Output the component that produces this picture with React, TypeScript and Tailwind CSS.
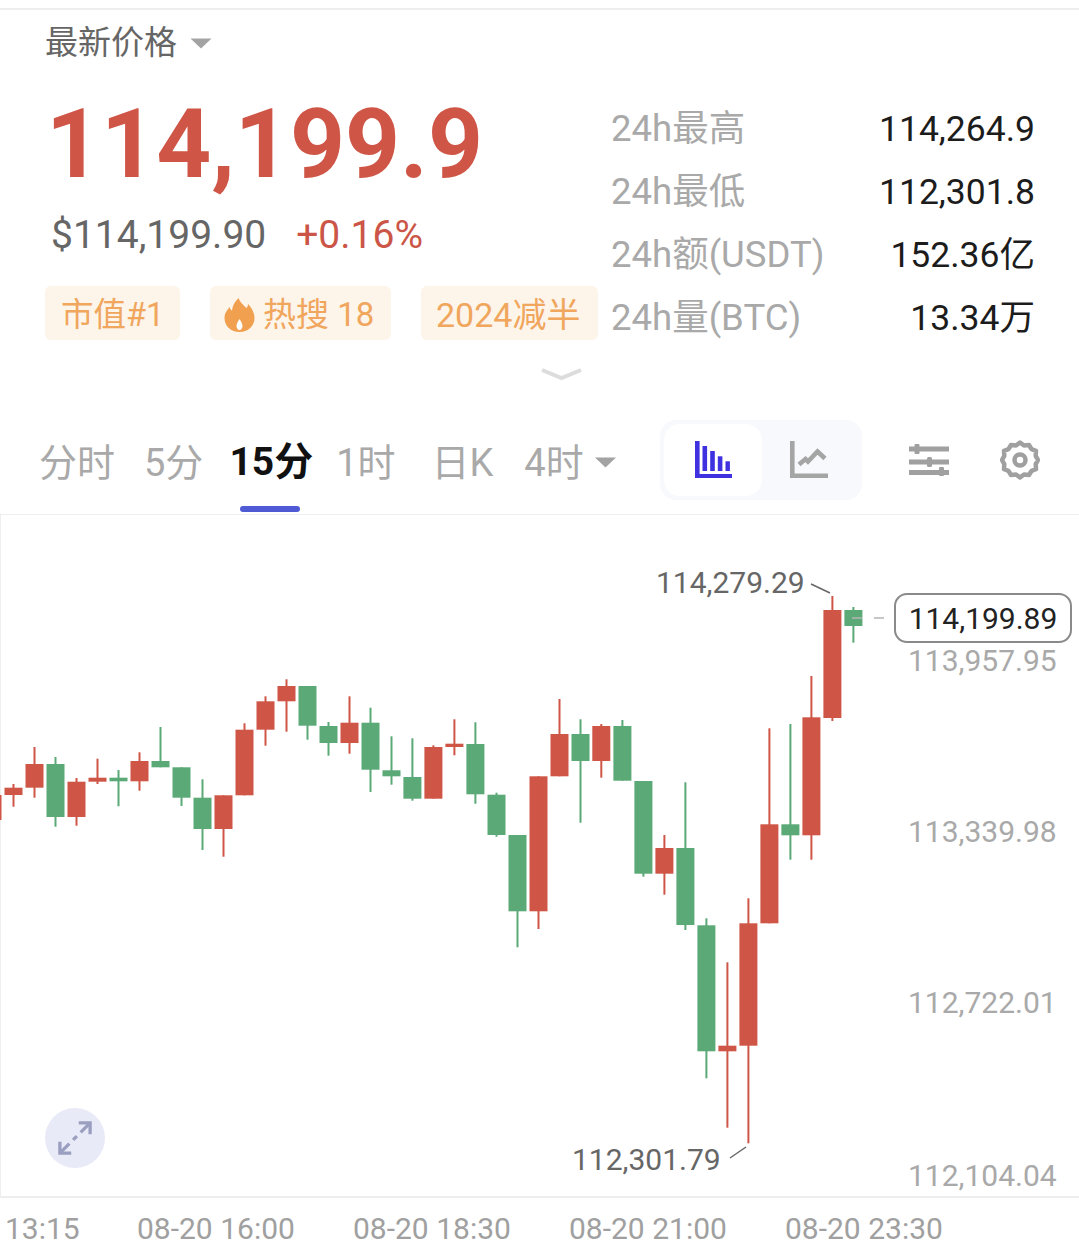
const UP = '#cf5647';
const DOWN = '#5aa976';

// [centre x, body top, body bottom, wick top, wick bottom, up?]
const CANDLES: [number, number, number, number, number, boolean][] = [
  [-7.5, 795, 820, 795, 820, true],
  [13.5, 787.7, 795, 784, 806.7, true],
  [34.5, 764, 787.7, 747, 797.7, true],
  [55.5, 764, 817, 757, 826.7, false],
  [76.5, 781.7, 817, 778, 825.7, true],
  [97.5, 777.7, 781.7, 758.7, 784, true],
  [118.5, 777.7, 781.3, 770, 806.3, false],
  [139.5, 761, 781.3, 752.3, 790.7, true],
  [160.5, 761, 767.3, 727, 767.3, false],
  [181.5, 767.3, 797.7, 767.3, 806, false],
  [202.5, 797.7, 829, 779.3, 850, false],
  [223.5, 795.3, 829, 795.3, 856.7, true],
  [244.5, 729.7, 795.3, 723.3, 795.3, true],
  [265.5, 701.3, 729.7, 696.3, 745.7, true],
  [286.5, 686, 701.3, 679.3, 731.7, true],
  [307.5, 686, 725.7, 686, 739.7, false],
  [328.5, 726, 743, 722, 755.7, false],
  [349.5, 722.7, 743, 696.3, 753.7, true],
  [370.5, 722.7, 769.7, 707.7, 792, false],
  [391.5, 770.3, 776.3, 736.3, 784.7, false],
  [412.4, 777, 798.7, 738.3, 800.7, false],
  [433.4, 747, 798.7, 745.3, 798.7, true],
  [454.4, 743.7, 747, 719.3, 755.3, true],
  [475.4, 744, 794.3, 722.3, 803.7, false],
  [496.5, 794.7, 835, 792.7, 836.7, false],
  [517.5, 835, 911.3, 835, 947.3, false],
  [538.5, 776.3, 911.3, 776.3, 929, true],
  [559.5, 734, 776.3, 699, 776.3, true],
  [580.5, 734, 761, 719.3, 822.7, false],
  [601.3, 726, 761, 724, 777.7, true],
  [622.4, 726, 780.7, 720, 780.7, false],
  [643.4, 781, 873.7, 781, 876.7, false],
  [664.4, 848, 873.7, 835, 894.7, true],
  [685.4, 848, 925, 782.3, 930, false],
  [706.4, 925.3, 1051.3, 918.3, 1078.3, false],
  [727.4, 1045.7, 1051.3, 962.3, 1127.7, true],
  [748.4, 923.3, 1045.7, 898.3, 1143.3, true],
  [769.4, 824.3, 923.3, 728.3, 923.3, true],
  [790.4, 824.3, 835.3, 724, 859.7, false],
  [811.4, 717.3, 835.3, 676, 859.7, true],
  [832.4, 610, 718, 596, 721, true],
  [853.4, 610, 626, 607, 642.7, false],
];

const CHART_TOP = 515;

const STATS = [
  ['24h最高', '114,264.9'],
  ['24h最低', '112,301.8'],
  ['24h额(USDT)', '152.36亿'],
  ['24h量(BTC)', '13.34万'],
];

const AXIS = [
  ['113,957.95', 'top-[128px]'],
  ['113,339.98', 'top-[299px]'],
  ['112,722.01', 'top-[470px]'],
  ['112,104.04', 'top-[643px]'],
];

const TIME_LABELS = ['08-20 16:00', '08-20 18:30', '08-20 21:00', '08-20 23:30'];

function Caret({ className }: { className: string }) {
  return (
    <svg viewBox="0 0 22 11" className={className} fill="#a3a3a3">
      <path d="M0.5 0.5h21L11 10.5z" />
    </svg>
  );
}

function FlameIcon() {
  return (
    <svg viewBox="0 0 30 34" className="h-[34px] w-[31px]">
      <path
        fill="#f0a04f"
        d="M14 0c2 5 5 7 8 10 1-1 1.500-2.500 1.500-4 4 4 6.500 9 6.500 14 0 8-6.500 14-15 14S0 28 0 20c0-5 3-8 5-11 .5 2 1.500 3 2.500 3.500C8 8 10 4 14 0z"
      />
      <path fill="#fff" d="M15 21c1.500 2.500 3 4.500 3 7 0 2-1.300 4-3 4s-3-2-3-4c0-2.500 1.500-4.500 3-7z" />
    </svg>
  );
}

function BarsIcon() {
  return (
    <svg viewBox="0 0 38 38" className="h-[38px] w-[38px]" fill="#3f30e0">
      <rect x="0" y="0" width="4.600" height="37" />
      <rect x="0" y="33" width="37" height="4" />
      <rect x="7.500" y="5" width="4.600" height="25" />
      <rect x="15.200" y="10" width="4.600" height="20" />
      <rect x="22.800" y="15.300" width="4.600" height="14.700" />
      <rect x="30.500" y="20.300" width="4.400" height="9.700" />
    </svg>
  );
}

function LineIcon() {
  return (
    <svg viewBox="0 0 38 38" className="h-[38px] w-[38px]" fill="none" stroke="#a5a5a5" strokeWidth="4.600">
      <path d="M2.300 0v34.700H38" />
      <path d="M9 23.500l6.500-5.500 2.500 2.500L27.500 10.500l7.500 7" />
    </svg>
  );
}

function SlidersIcon() {
  return (
    <svg viewBox="0 0 40 32" className="h-[32px] w-[40px]" fill="#a0a0a0">
      <rect x="0" y="2.500" width="40" height="5" />
      <rect x="0" y="15.500" width="40" height="5" />
      <rect x="0" y="26" width="40" height="5" />
      <rect x="5.500" y="0" width="5" height="10" rx="1" />
      <rect x="18" y="13" width="5" height="10" rx="1.500" />
      <rect x="30" y="23" width="5" height="9" rx="1" />
    </svg>
  );
}

function GearIcon() {
  return (
    <svg viewBox="0 0 40 40" className="h-[40px] w-[40px]" fill="none" stroke="#a0a0a0">
      <path
        strokeWidth="4.500"
        strokeLinejoin="round"
        d="M20 2.500l4 3 5-.5 2.500 4.200 4.500 1.600-.3 5L38 20l-2.300 4.200.3 5-4.500 1.600L29 35l-5-.5-4 3-4-3-5 .5-2.500-4.200L4 29.200l.3-5L2 20l2.300-4.200-.3-5 4.500-1.600L11 5l5 .5z"
      />
      <circle cx="20" cy="20" r="5.500" strokeWidth="4.500" />
    </svg>
  );
}

function ExpandIcon() {
  return (
    <svg viewBox="0 0 36 36" className="h-[34px] w-[34px]" fill="none" stroke="#9a9fc0" strokeWidth="3.500">
      <path d="M22 2h12v12" />
      <path d="M33 3L24 12" />
      <path d="M14 34H2V22" />
      <path d="M3 33l9-9" />
      <path d="M16 20l4-4" />
    </svg>
  );
}

export default function App() {
  const tagClass = 'flex h-[54px] items-center rounded-md bg-[#fdf4ea] pt-[4px] text-[#f0a65c]';
  const tabClass = 'text-[38px] leading-none text-[#a9a9a9]';

  return (
    <div className="h-[1255px] w-[1079px] overflow-hidden bg-white font-['Roboto','Noto_Sans_CJK_SC',sans-serif]">
      <div className="mt-2 h-[2px] bg-[#eeeeee]" />

      {/* header */}
      <div className="flex h-[66px] items-center gap-[13px] pl-[45px] pb-[2px]">
        <span className="text-[33px] leading-none text-[#666666]">最新价格</span>
        <Caret className="mt-[2px] h-[11px] w-[22px]" />
      </div>

      {/* quote */}
      <div className="flex h-[334px] items-start">
        <div className="w-[611px] shrink-0">
          <div className="pl-[46px] pt-[12px] text-[96px] font-bold leading-[112px] text-[#cf5647]">114,199.9</div>
          <div className="mt-[13px] flex items-center gap-[30px] pl-[51px] text-[39px] leading-[44px]">
            <span className="text-[#666666]">$114,199.90</span>
            <span className="text-[#cb5547]">+0.16%</span>
          </div>
          <div className="mt-[29px] flex pl-[45px]">
            <div className={`${tagClass} w-[135px] pl-[16px] text-[32.5px]`}>市值#1</div>
            <div className={`${tagClass} ml-[30px] w-[181px] gap-[8px] pl-[14px] text-[33px]`}>
              <FlameIcon />
              <span>热搜 18</span>
            </div>
            <div className={`${tagClass} ml-[30px] w-[177px] pl-[15px] text-[34px]`}>2024减半</div>
          </div>
          <div className="mt-[28px] pl-[541px]">
            <svg viewBox="0 0 41 13" className="h-[13px] w-[41px]" fill="none" stroke="#dcdcdc" strokeWidth="4">
              <path d="M1 2l19.500 8L40 2" />
            </svg>
          </div>
        </div>

        <div className="flex flex-1 flex-col pr-[44px] pt-[22px]">
          {STATS.map(([label, value]) => (
            <div key={label} className="flex h-[63px] items-center justify-between leading-none">
              <span className="text-[36.5px] text-[#a9a9a9]">{label}</span>
              <span className="text-[35.5px] text-[#1c1c1c]">{value}</span>
            </div>
          ))}
        </div>
      </div>

      {/* period tabs */}
      <div className="relative flex h-[105px] items-center border-b border-[#eeeeee] pb-[4px]">
        <div className="flex items-center pl-[39px] pt-[5px]">
          <span className={tabClass}>分时</span>
          <span className={`${tabClass} ml-[29px]`}>5分</span>
          <span className="ml-[26px] text-[39px] font-bold leading-none text-[#111111]">15分</span>
          <span className={`${tabClass} ml-[23px]`}>1时</span>
          <span className={`${tabClass} ml-[36px]`}>日K</span>
          <span className={`${tabClass} ml-[31px]`}>4时</span>
          <Caret className="ml-[10px] h-[11px] w-[23px]" />
        </div>
        <div className="absolute left-[240px] top-[96px] h-[6px] w-[60px] rounded-full bg-[#4f5bd5]" />

        <div className="ml-[43px] flex h-[80px] w-[202px] items-center rounded-2xl bg-[#f8f9fc] p-1">
          <div className="flex h-[72px] w-[98px] items-center justify-center rounded-2xl bg-white pl-[2px]">
            <BarsIcon />
          </div>
          <div className="flex h-[72px] w-[94px] items-center justify-center">
            <LineIcon />
          </div>
        </div>
        <div className="ml-[47px]">
          <SlidersIcon />
        </div>
        <div className="ml-[51px]">
          <GearIcon />
        </div>
      </div>

      {/* chart */}
      <div className="relative h-[683px] border-b-2 border-l border-[#eeeeee]">
        <svg className="absolute -left-[1px] top-0 h-[682px] w-[1079px]" viewBox={`0 ${CHART_TOP} 1079 682`}>
          {CANDLES.map(([x, top, bottom, wickTop, wickBottom, up]) => (
            <g key={x} fill={up ? UP : DOWN}>
              <rect x={x - 1} y={wickTop} width="2" height={wickBottom - wickTop} />
              <rect x={x - 9} y={top} width="18" height={bottom - top} />
            </g>
          ))}
          <path d="M811 584l19 9" stroke="#666666" strokeWidth="1.500" fill="none" />
          <path d="M730 1158l16-11" stroke="#666666" strokeWidth="1.500" fill="none" />
          <path d="M852 618h10M874 618h10" stroke="#b5b5b5" strokeWidth="1.500" fill="none" />
        </svg>

        <span className="absolute left-[655px] top-[50px] text-[30px] leading-[36px] text-[#666666]">114,279.29</span>
        <span className="absolute left-[571px] top-[627px] text-[30px] leading-[36px] text-[#666666]">112,301.79</span>

        <div className="absolute left-[893px] top-[78px] flex h-[50px] w-[178px] items-center justify-center rounded-[13px] border-2 border-[#8a8a8a] bg-white text-[30px] text-[#222222]">
          114,199.89
        </div>
        {AXIS.map(([value, top]) => (
          <span key={value} className={`absolute left-[907px] ${top} text-[30px] leading-[36px] text-[#a9a9a9]`}>
            {value}
          </span>
        ))}

        <div className="absolute left-[44px] top-[593px] flex h-[60px] w-[60px] items-center justify-center rounded-full bg-[#e9eaf8]">
          <ExpandIcon />
        </div>
      </div>

      {/* time axis */}
      <div className="flex h-[57px] items-center pl-[5px] pt-[5px] text-[30px] leading-none text-[#a0a0a0]">
        <span className="w-[132px] whitespace-nowrap">13:15</span>
        <div className="flex gap-[60px]">
          {TIME_LABELS.map((t) => (
            <span key={t} className="w-[156px] whitespace-nowrap">
              {t}
            </span>
          ))}
        </div>
      </div>
    </div>
  );
}
